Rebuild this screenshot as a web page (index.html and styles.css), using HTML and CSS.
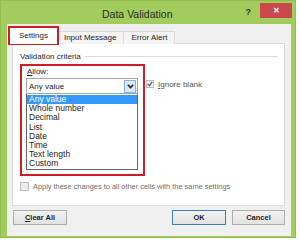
FILE: index.html
```html
<html>
    <head>
        <title>Data Validation</title>
        <link rel="stylesheet" href="styles.css">
    </head>
    <body>
        <div class="dialog">
            <div class="titlebar">
                <div class="title">Data Validation</div>
                <div class="help">?</div>
                <div class="close">&#x2715;</div>
            </div>
            <div class="client">
                <div class="tabs">
                    <div class="tab tab-active">Settings</div>
                    <div class="tab">Input Message</div>
                    <div class="tab">Error Alert</div>
                </div>
                <div class="panel">
                    <div class="group-head">
                        <span>Validation criteria</span>
                        <div class="group-line"></div>
                    </div>
                    <div class="criteria">
                        <div class="allow-box">
                            <div class="allow-label"><u>A</u>llow:</div>
                            <div class="combo">
                                <span>Any value</span>
                                <div class="combo-btn">
                                    <svg width="7" height="5" viewBox="0 0 7 5">
                                        <path d="M0.8 0.8 L3.5 3.6 L6.2 0.8" fill="none" stroke="#1e1e1e" stroke-width="1.6"/>
                                    </svg>
                                </div>
                            </div>
                            <div class="list">
                                <div class="item item-selected">Any value</div>
                                <div class="item">Whole number</div>
                                <div class="item">Decimal</div>
                                <div class="item">List</div>
                                <div class="item">Date</div>
                                <div class="item">Time</div>
                                <div class="item">Text length</div>
                                <div class="item">Custom</div>
                            </div>
                        </div>
                        <div class="ignore">
                            <div class="check check-on">
                                <svg width="6" height="6" viewBox="0 0 6 6">
                                    <path d="M0.8 3 L2.4 4.8 L5.3 0.8" fill="none" stroke="#555" stroke-width="1.2"/>
                                </svg>
                            </div>
                            <span><u>I</u>gnore blank</span>
                        </div>
                    </div>
                    <div class="apply">
                        <div class="check"></div>
                        <span>Apply these changes to all other cells with the same settings</span>
                    </div>
                </div>
                <div class="buttons">
                    <div class="btn btn-clear"><u>C</u>lear All</div>
                    <div class="spacer"></div>
                    <div class="btn btn-ok">OK</div>
                    <div class="btn">Cancel</div>
                </div>
            </div>
        </div>
    </body>
</html>
```
FILE: styles.css
```css
body{
    margin: 0;
    background-color: #ffffff;
    font-family: "Liberation Sans", Arial, sans-serif;
    font-size: 8px;
    color: #1e1e1e;
}
.dialog{
    width: 294px;
    height: 236px;
    background-color: #a2cd5e;
    border: 1px solid #8fbe4c;
    display: flex;
    flex-direction: column;
}
.titlebar{
    height: 23px;
    display: flex;
    align-items: flex-start;
}
.title{
    flex: 1;
    text-align: center;
    font-size: 10.5px;
    color: #2a2a2a;
    margin-top: 7px;
    padding-left: 28px;
}
.help{
    font-size: 9px;
    font-weight: bold;
    color: #2a2a2a;
    margin-top: 6px;
    margin-right: 9px;
}
.close{
    width: 32px;
    height: 15px;
    margin-top: 2px;
    margin-right: 3px;
    background-color: #c9494d;
    color: #ffffff;
    font-size: 8px;
    font-weight: bold;
    text-align: center;
    line-height: 15px;
}
.client{
    flex: 1;
    background-color: #f0f0f0;
    margin: 0 4px 1px 6px;
    padding: 4px 6px 0 5px;
    display: flex;
    flex-direction: column;
}
.tabs{
    display: flex;
    align-items: flex-end;
    height: 16px;
    position: relative;
    z-index: 1;
    margin-bottom: -1px;
}
.tab{
    height: 12px;
    line-height: 12px;
    padding: 0 7px;
    border: 1px solid #d9d9d9;
    border-bottom: none;
    background-color: #f4f4f4;
    margin-left: -1px;
}
.tab-active{
    height: 16px;
    line-height: 16px;
    margin-left: -3px;
    margin-right: -1px;
    padding: 0 9px 0 9px;
    background-color: #ffffff;
    border: 1px solid #d01c22;
    border-bottom: none;
    outline: 1px solid #d01c22;
    position: relative;
    z-index: 2;
}
.panel{
    height: 161px;
    background-color: #ffffff;
    border: 1px solid #d9d9d9;
    padding: 0 6px 0 7px;
}
.group-head{
    display: flex;
    align-items: center;
    margin-top: 7px;
    height: 10px;
}
.group-line{
    flex: 1;
    height: 1px;
    background-color: #dcdcdc;
    margin-left: 4px;
}
.criteria{
    display: flex;
    margin-top: 3px;
}
.allow-box{
    width: 112px;
    height: 107px;
    border: 2px solid #d01c22;
    padding: 1px 5px 0 4px;
}
.allow-label{
    height: 10px;
    line-height: 10px;
    margin-left: 1px;
}
.combo{
    height: 14px;
    border: 1px solid #a5a5a5;
    display: flex;
    align-items: center;
    justify-content: space-between;
    padding-left: 2px;
    margin-top: 1px;
}
.combo-btn{
    width: 10px;
    height: 11px;
    margin-right: 1px;
    background-color: #d9ebfb;
    border: 1px solid #7eb4ea;
    display: flex;
    align-items: center;
    justify-content: center;
}
.list{
    border: 1px solid #646464;
    border-top: none;
    padding-top: 1px;
}
.item{
    height: 9.2px;
    line-height: 9.2px;
    padding-left: 2px;
    font-size: 8.5px;
}
.item-selected{
    background-color: #3399ff;
    color: #ffffff;
}
.ignore{
    display: flex;
    align-items: center;
    margin-top: 16px;
    margin-left: 1px;
    height: 8px;
    color: #555555;
}
.check{
    width: 6px;
    height: 6px;
    border: 1px solid #bcbcbc;
    background-color: #f4f4f4;
    margin-right: 4px;
    display: flex;
    align-items: center;
    justify-content: center;
}
.apply{
    display: flex;
    align-items: center;
    margin-top: 6px;
    color: #6d6d6d;
    font-size: 7.4px;
}
.apply .check{
    width: 7px;
    height: 7px;
    background-color: #ececec;
    margin-right: 4px;
}
.buttons{
    display: flex;
    margin-top: 4px;
}
.spacer{
    flex: 1;
}
.btn{
    width: 51px;
    height: 13px;
    line-height: 13px;
    text-align: center;
    border: 1px solid #adadad;
    background: linear-gradient(#f2f2f2, #e3e3e3);
    margin-left: 6px;
    font-weight: bold;
    font-size: 7.5px;
}
.btn-clear{
    margin-left: 1px;
    width: 52px;
}
.btn-ok{
    border-color: #3c7fb1;
    width: 52px;
}
```
